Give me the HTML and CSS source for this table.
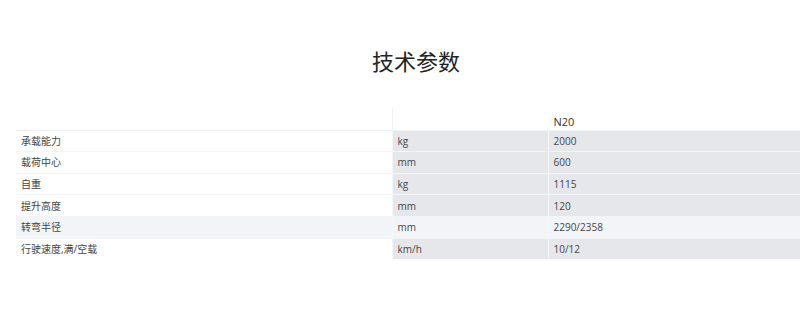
FILE: index.html
```html
<!DOCTYPE html>
<html lang="zh">
<head>
<meta charset="utf-8">
<link rel="stylesheet" href="styles.css">
</head>
<body>
<div class="page">
  <h2 class="title">技术参数</h2>
  <table class="spec">
    <colgroup>
      <col class="c1"><col class="c2"><col class="c3">
    </colgroup>
    <thead>
      <tr><th></th><th></th><th class="model">N20</th></tr>
    </thead>
    <tbody>
      <tr><td>承载能力</td><td>kg</td><td>2000</td></tr>
      <tr><td>载荷中心</td><td>mm</td><td>600</td></tr>
      <tr><td>自重</td><td>kg</td><td>1115</td></tr>
      <tr><td>提升高度</td><td>mm</td><td>120</td></tr>
      <tr class="hl"><td>转弯半径</td><td>mm</td><td>2290/2358</td></tr>
      <tr><td>行驶速度,满/空载</td><td>km/h</td><td>10/12</td></tr>
    </tbody>
  </table>
</div>
</body>
</html>
```

FILE: styles.css
```css
html, body {
  margin: 0;
  padding: 0;
  background: #fff;
  overflow: hidden;
}
body {
  font-family: "Open Sans", "Noto Sans CJK SC", sans-serif;
  color: #444;
}
.page {
  width: 800px;
  margin-left: 16px;
  padding-top: 45px;
}
.title {
  margin: 0 0 33px;
  text-align: center;
  font-family: "Noto Sans CJK SC", sans-serif;
  font-weight: 400;
  font-size: 22px;
  line-height: 30px;
  color: #222;
}
.spec {
  width: 800px;
  border-collapse: collapse;
  table-layout: fixed;
  font-size: 10px;
}
.c1 { width: 376px; }
.c2 { width: 156px; }
.c3 { width: 268px; }
.spec th, .spec td {
  height: 20.6px;
  padding: 0 5px;
  text-align: left;
  font-weight: 400;
  line-height: 14px;
  border-bottom: 1px solid #f1f2f5;
}
.spec th {
  background: #fff;
  vertical-align: bottom;
  padding-bottom: 1px;
}
.spec th + th {
  border-left: 1px solid #eef0f2;
}
.spec th.model {
  border-left: 1px solid #fff;
  font-size: 11px;
  color: #333;
}
.spec td + td {
  background: #e6e7eb;
  border-left: 1px solid #f5f6f8;
}
.spec tbody tr td {
  border-bottom-color: #f3f4f7;
}
.spec tbody tr:last-child td {
  border-bottom-color: #fff;
}
.spec tr.hl td {
  background: #f3f4f8;
}
```
